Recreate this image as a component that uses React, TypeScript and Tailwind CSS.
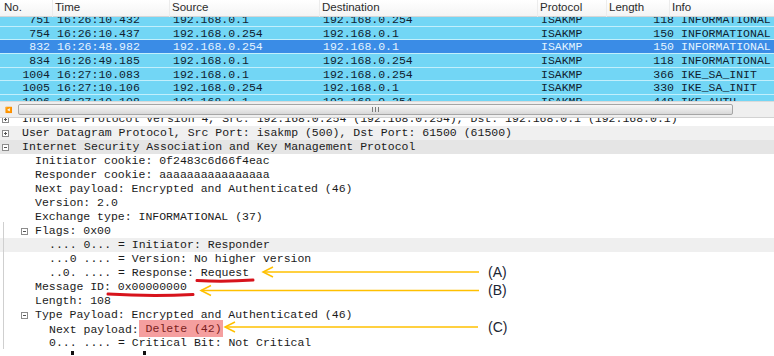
import React from 'react'

// packet list rows (first and last are only partly visible)
const packets = [
  { no: '751', time: '16:26:10.432', src: '192.168.0.1', dst: '192.168.0.254', len: '118', info: 'INFORMATIONAL' },
  { no: '754', time: '16:26:10.437', src: '192.168.0.254', dst: '192.168.0.1', len: '150', info: 'INFORMATIONAL' },
  { no: '832', time: '16:26:48.982', src: '192.168.0.254', dst: '192.168.0.1', len: '150', info: 'INFORMATIONAL', sel: true },
  { no: '834', time: '16:26:49.185', src: '192.168.0.1', dst: '192.168.0.254', len: '118', info: 'INFORMATIONAL' },
  { no: '1004', time: '16:27:10.083', src: '192.168.0.1', dst: '192.168.0.254', len: '366', info: 'IKE_SA_INIT' },
  { no: '1005', time: '16:27:10.106', src: '192.168.0.254', dst: '192.168.0.1', len: '330', info: 'IKE_SA_INIT' },
  { no: '1006', time: '16:27:10.108', src: '192.168.0.1', dst: '192.168.0.254', len: '448', info: 'IKE_AUTH' },
]

function Expander({ open }: { open: boolean }) {
  return (
    <svg width="7" height="7" viewBox="0 0 7 7" className="shrink-0">
      <rect x="0.5" y="0.5" width="6" height="6" fill="#fff" stroke="#8c8c8c" />
      <line x1="2" y1="3.5" x2="5" y2="3.5" stroke="#555" />
      {!open && <line x1="3.5" y1="2" x2="3.5" y2="5" stroke="#555" />}
    </svg>
  )
}

function TreeRow({
  level,
  box,
  bg = '',
  children,
}: {
  level: 0 | 1 | 2
  box?: 'open' | 'closed'
  bg?: string
  children: React.ReactNode
}) {
  const gutter = level === 0 ? 'w-[22px] pl-[2px]' : level === 1 ? 'w-[35px] pl-[21px]' : 'w-[49px]'
  return (
    <div className={`flex items-center h-[14px] leading-[14px] whitespace-pre ${bg}`}>
      <div className={`${gutter} shrink-0 flex items-center`}>
        {box && <Expander open={box === 'open'} />}
      </div>
      <div>{children}</div>
    </div>
  )
}

export default function App() {
  return (
    <div className="relative w-[774px] h-[356px] overflow-hidden bg-white">
      {/* Packet list header */}
      <div className="flex h-[17px] items-center bg-gradient-to-b from-white to-[#f4f4f4] border-b border-[#d6d6d6] text-[11.5px] text-[#2b2b2b] font-['Liberation_Sans',Arial,sans-serif]">
        <div className="w-[53px] pl-[4px] border-r border-[#ececec]">No.</div>
        <div className="w-[117px] pl-[2px] border-r border-[#ececec]">Time</div>
        <div className="w-[150px] pl-[2px] border-r border-[#ececec]">Source</div>
        <div className="w-[218px] pl-[2px] border-r border-[#ececec]">Destination</div>
        <div className="w-[69px] pl-[2px] border-r border-[#ececec]">Protocol</div>
        <div className="w-[63px] pl-[2px] border-r border-[#ececec]">Length</div>
        <div className="pl-[2px]">Info</div>
      </div>

      {/* Packet list rows */}
      <div className="h-[84px] overflow-hidden font-['Liberation_Mono','DejaVu_Sans_Mono',monospace] text-[11.5px]">
        <div className="-mt-[4px]">
          {packets.map((p) => (
            <div
              key={p.no}
              className={`flex h-[13.7px] leading-[13px] border-b border-[#c2effc] whitespace-pre ${
                p.sel ? 'bg-[#3a8ce6] text-[#e4f4ff]' : 'bg-[#72d6f5] text-[#10212f]'
              }`}
            >
              <div className="w-[53px] pr-[3px] text-right">{p.no}</div>
              <div className="w-[117px] pl-[4px]">{p.time}</div>
              <div className="w-[150px] pl-[3px]">{p.src}</div>
              <div className="w-[218px] pl-[3px]">{p.dst}</div>
              <div className="w-[69px] pl-[3px]">ISAKMP</div>
              <div className="w-[67px] text-right">{p.len}</div>
              <div className="pl-[7px]">{p.info}</div>
            </div>
          ))}
        </div>
      </div>

      {/* Horizontal scrollbar */}
      <div className="flex h-[16px] items-center bg-[#efefef] border-t border-[#dadada]">
        <div className="w-[18px] flex justify-center text-[6px] leading-none text-[#a0a0a0]">◀</div>
        <div className="w-[715px] h-[11px] rounded-[2px] border border-[#a5a5a5] bg-gradient-to-b from-[#f8f8f8] to-[#d8d8d8] flex items-center justify-center gap-[2px]">
          <div className="w-px h-[5px] bg-[#7a7a7a]" />
          <div className="w-px h-[5px] bg-[#7a7a7a]" />
          <div className="w-px h-[5px] bg-[#7a7a7a]" />
        </div>
      </div>

      {/* Packet details tree */}
      <div className="h-[232px] overflow-hidden border-t border-[#d2d2d2] font-['Liberation_Mono','DejaVu_Sans_Mono',monospace] text-[11.5px] text-[#1b1b1b]">
        <div className="-mt-[6px]">
          <TreeRow level={0} box="closed">
            Internet Protocol Version 4, Src: 192.168.0.254 (192.168.0.254), Dst: 192.168.0.1 (192.168.0.1)
          </TreeRow>
          <TreeRow level={0} box="closed" bg="bg-[#f0f0f0]">
            User Datagram Protocol, Src Port: isakmp (500), Dst Port: 61500 (61500)
          </TreeRow>
          <TreeRow level={0} box="open" bg="bg-[#e5e5e5]">
            Internet Security Association and Key Management Protocol
          </TreeRow>
          <TreeRow level={1}>Initiator cookie: 0f2483c6d66f4eac</TreeRow>
          <TreeRow level={1}>Responder cookie: aaaaaaaaaaaaaaaa</TreeRow>
          <TreeRow level={1}>Next payload: Encrypted and Authenticated (46)</TreeRow>
          <TreeRow level={1}>Version: 2.0</TreeRow>
          <TreeRow level={1}>Exchange type: INFORMATIONAL (37)</TreeRow>
          <TreeRow level={1} box="open">Flags: 0x00</TreeRow>
          <TreeRow level={2} bg="bg-[#efefef]">.... 0... = Initiator: Responder</TreeRow>
          <TreeRow level={2}>...0 .... = Version: No higher version</TreeRow>
          <TreeRow level={2}>..0. .... = Response: Request</TreeRow>
          <TreeRow level={1}>Message ID: 0x00000000</TreeRow>
          <TreeRow level={1}>Length: 108</TreeRow>
          <TreeRow level={1} box="open">Type Payload: Encrypted and Authenticated (46)</TreeRow>
          <TreeRow level={2}>
            Next payload:
            <span className="inline-block h-[17px] leading-[17px] -my-[1.5px] bg-[#f59f9f] text-[#7a1d1d] pr-[1px]"> Delete (42)</span>
          </TreeRow>
          <TreeRow level={2}>0... .... = Critical Bit: Not Critical</TreeRow>
        </div>
      </div>

      {/* cut-off marks below the pane */}
      <div className="flex h-[7px] items-center">
        <div className="ml-[71px] w-[3px] h-[4px] bg-[#111]" />
        <div className="ml-[69px] w-[3px] h-[4px] bg-[#111]" />
      </div>

      {/* Annotations */}
      <svg className="absolute left-0 top-0 pointer-events-none" width="774" height="356">
        <line x1="3.5" y1="222" x2="3.5" y2="349" stroke="#cfcfcf" />
        <path d="M197 280.5 Q225 282 253 280" stroke="#d7131c" strokeWidth="3" strokeLinecap="round" fill="none" />
        <path d="M108 294 Q150 296.5 193 294.5" stroke="#d7131c" strokeWidth="3" strokeLinecap="round" fill="none" />
        <g stroke="#ffc000" strokeWidth="1.5" fill="none">
          <line x1="263" y1="272" x2="479" y2="272" />
          <polyline points="273,267 263,272 273,277" />
          <line x1="201" y1="290.5" x2="479" y2="290.5" />
          <polyline points="211,285.5 201,290.5 211,295.5" />
          <line x1="225" y1="327" x2="478" y2="327" />
          <polyline points="235,322 225,327 235,332" />
        </g>
      </svg>
      <div className="absolute left-[488px] top-[263px] text-[14px] leading-[18px] text-[#1b2533] font-['Liberation_Sans',Arial,sans-serif]">(A)</div>
      <div className="absolute left-[488px] top-[281px] text-[14px] leading-[18px] text-[#1b2533] font-['Liberation_Sans',Arial,sans-serif]">(B)</div>
      <div className="absolute left-[488px] top-[318px] text-[14px] leading-[18px] text-[#1b2533] font-['Liberation_Sans',Arial,sans-serif]">(C)</div>
    </div>
  )
}
